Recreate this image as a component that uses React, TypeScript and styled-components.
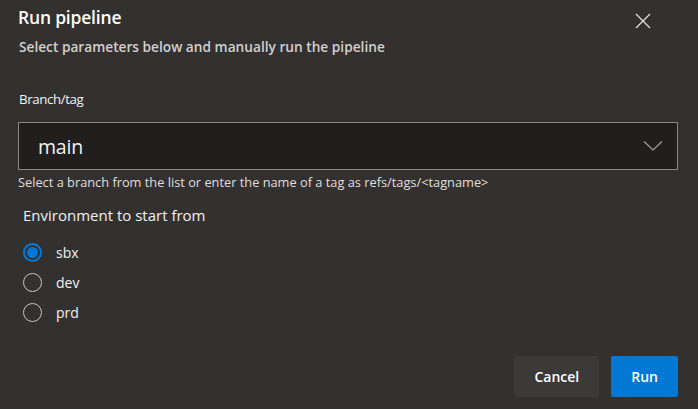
import React, { useState } from "react";
import styled, { createGlobalStyle } from "styled-components";

const GlobalStyle = createGlobalStyle`
  html, body { margin: 0; padding: 0; background: #323130; }
  body { font-family: "Open Sans", "Noto Sans", sans-serif; color: #f3f2f1; }
  * { box-sizing: border-box; }
`;

const Dialog = styled.div`
  width: 698px;
  height: 409px;
  background: #323130;
  padding: 0 20px 0 18px;
  display: flex;
  flex-direction: column;
`;

const Header = styled.div`
  display: flex;
  justify-content: space-between;
  align-items: flex-start;
  padding-top: 3px;
`;

const Title = styled.h1`
  margin: 0;
  font-size: 17.5px;
  font-weight: 600;
  line-height: 28px;
  color: #ffffff;
  letter-spacing: -0.2px;
`;

const CloseButton = styled.button`
  width: 32px;
  height: 32px;
  margin: 2px 19px 0 0;
  background: transparent;
  border: none;
  padding: 0;
  display: flex;
  align-items: center;
  justify-content: center;
  cursor: pointer;
`;

const Subtitle = styled.p`
  margin: 0 0 0 1px;
  font-size: 13.7px;
  font-weight: 600;
  line-height: 20px;
  color: #d2d0ce;
`;

const FieldLabel = styled.label`
  display: block;
  margin: 32px 0 0 1px;
  font-size: 13.3px;
  line-height: 20px;
  color: #f3f2f1;
  letter-spacing: -0.4px;
`;

const SelectBox = styled.div`
  margin-top: 13px;
  height: 48px;
  border: 1px solid #8a8886;
  background: #201f1e;
  display: flex;
  align-items: center;
  justify-content: space-between;
  padding: 0 14px 0 19px;
`;

const SelectValue = styled.span`
  font-size: 19.5px;
  color: #f3f2f1;
  letter-spacing: -0.2px;
`;

const Help = styled.div`
  margin-top: 4px;
  font-size: 12.8px;
  line-height: 17px;
  color: #e1dfdd;
`;

const GroupLabel = styled.div`
  margin: 14px 0 0 5px;
  font-size: 15px;
  line-height: 20px;
  color: #f3f2f1;
`;

const RadioList = styled.div`
  margin: 17px 0 0 5px;
  display: flex;
  flex-direction: column;
  gap: 10px;
`;

const RadioRow = styled.label`
  display: flex;
  align-items: center;
  height: 20px;
  gap: 14px;
  cursor: pointer;
`;

const RadioCircle = styled.span<{ $checked: boolean }>`
  width: 19px;
  height: 19px;
  border-radius: 50%;
  border: ${(p) => (p.$checked ? "2px solid #0078d4" : "1px solid #c8c6c4")};
  display: flex;
  align-items: center;
  justify-content: center;
  &::after {
    content: "";
    width: 11px;
    height: 11px;
    border-radius: 50%;
    background: ${(p) => (p.$checked ? "#0078d4" : "transparent")};
  }
`;

const RadioText = styled.span`
  font-size: 14px;
  color: #f3f2f1;
`;

const Footer = styled.div`
  margin-top: auto;
  margin-bottom: 12px;
  display: flex;
  justify-content: flex-end;
  gap: 12px;
`;

const Button = styled.button<{ $primary?: boolean }>`
  height: 41px;
  padding: 0 20px;
  border: none;
  border-radius: 2px;
  font-family: inherit;
  font-size: 14px;
  font-weight: 600;
  color: #ffffff;
  background: ${(p) => (p.$primary ? "#0078d4" : "#3b3a39")};
  cursor: pointer;
`;

const options = ["sbx", "dev", "prd"];

export default function App() {
  const [env, setEnv] = useState("sbx");
  return (
    <>
      <GlobalStyle />
      <Dialog>
        <Header>
          <Title>Run pipeline</Title>
          <CloseButton aria-label="Close">
            <svg width="16" height="16" viewBox="0 0 16 16">
              <path d="M1 1 L15 15 M15 1 L1 15" stroke="#e1dfdd" strokeWidth="1.3" />
            </svg>
          </CloseButton>
        </Header>
        <Subtitle>Select parameters below and manually run the pipeline</Subtitle>
        <FieldLabel>Branch/tag</FieldLabel>
        <SelectBox>
          <SelectValue>main</SelectValue>
          <svg width="20" height="12" viewBox="0 0 20 12">
            <path d="M1 1.5 L10 10 L19 1.5" stroke="#a19f9d" strokeWidth="1.2" fill="none" />
          </svg>
        </SelectBox>
        <Help>Select a branch from the list or enter the name of a tag as refs/tags/&lt;tagname&gt;</Help>
        <GroupLabel>Environment to start from</GroupLabel>
        <RadioList>
          {options.map((o) => (
            <RadioRow key={o} onClick={() => setEnv(o)}>
              <RadioCircle $checked={env === o} />
              <RadioText>{o}</RadioText>
            </RadioRow>
          ))}
        </RadioList>
        <Footer>
          <Button>Cancel</Button>
          <Button $primary>Run</Button>
        </Footer>
      </Dialog>
    </>
  );
}
